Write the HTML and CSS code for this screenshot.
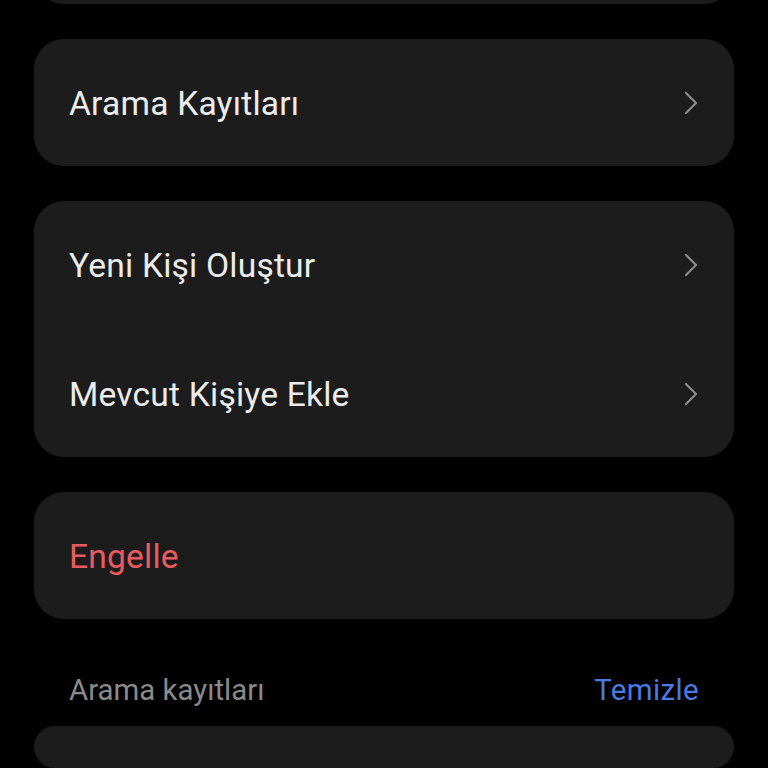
FILE: index.html
```html
<!DOCTYPE html>
<html>
<head>
<meta charset="utf-8">
<link rel="stylesheet" href="styles.css">
</head>
<body>
<div class="page">
  <div class="card card-top"></div>
  <div class="card">
    <div class="row"><span class="label">Arama Kayıtları</span><svg class="chev" viewBox="0 0 14 24"><path d="M2 2 L12 12 L2 22" /></svg></div>
  </div>
  <div class="card">
    <div class="row"><span class="label">Yeni Kişi Oluştur</span><svg class="chev" viewBox="0 0 14 24"><path d="M2 2 L12 12 L2 22" /></svg></div>
    <div class="row"><span class="label">Mevcut Kişiye Ekle</span><svg class="chev" viewBox="0 0 14 24"><path d="M2 2 L12 12 L2 22" /></svg></div>
  </div>
  <div class="card">
    <div class="row"><span class="label danger">Engelle</span></div>
  </div>
  <div class="section">
    <span class="section-title">Arama kayıtları</span>
    <span class="section-action">Temizle</span>
  </div>
  <div class="card card-bottom"></div>
</div>
</body>
</html>
```
FILE: styles.css
```css
html, body {
  margin: 0;
  padding: 0;
  background: #000;
  overflow: hidden;
}
body {
  width: 768px;
  height: 768px;
  font-family: Roboto, "Noto Sans", sans-serif;
}
.page {
  padding: 0 34px;
  display: flex;
  flex-direction: column;
  gap: 35px;
}
.card {
  background: #1c1c1c;
  border-radius: 30px;
  display: flex;
  flex-direction: column;
}
.card-top {
  height: 128px;
  margin-top: -124px;
}
.card-bottom {
  height: 42px;
}
.row {
  height: 127px;
  display: flex;
  align-items: center;
  justify-content: space-between;
  padding: 0 36px 0 35px;
}
.card .row + .row {
  margin-top: 2px;
}
.label {
  color: #ececec;
  font-size: 33.6px;
  letter-spacing: 0.2px;
  padding-top: 2px;
}
.danger {
  color: #ea5a61;
}
.chev {
  width: 14px;
  height: 24px;
  fill: none;
  stroke: #8c8c8c;
  stroke-width: 2.2;
  stroke-linecap: round;
  stroke-linejoin: round;
}
.section {
  display: flex;
  justify-content: space-between;
  align-items: center;
  padding: 0 35px;
  height: 36px;
  margin-top: 18px;
  margin-bottom: -17px;
}
.section-title {
  color: #8a8a8a;
  font-size: 29.4px;
}
.section-action {
  color: #4b7be2;
  font-size: 29.4px;
  letter-spacing: 0.4px;
}
```
